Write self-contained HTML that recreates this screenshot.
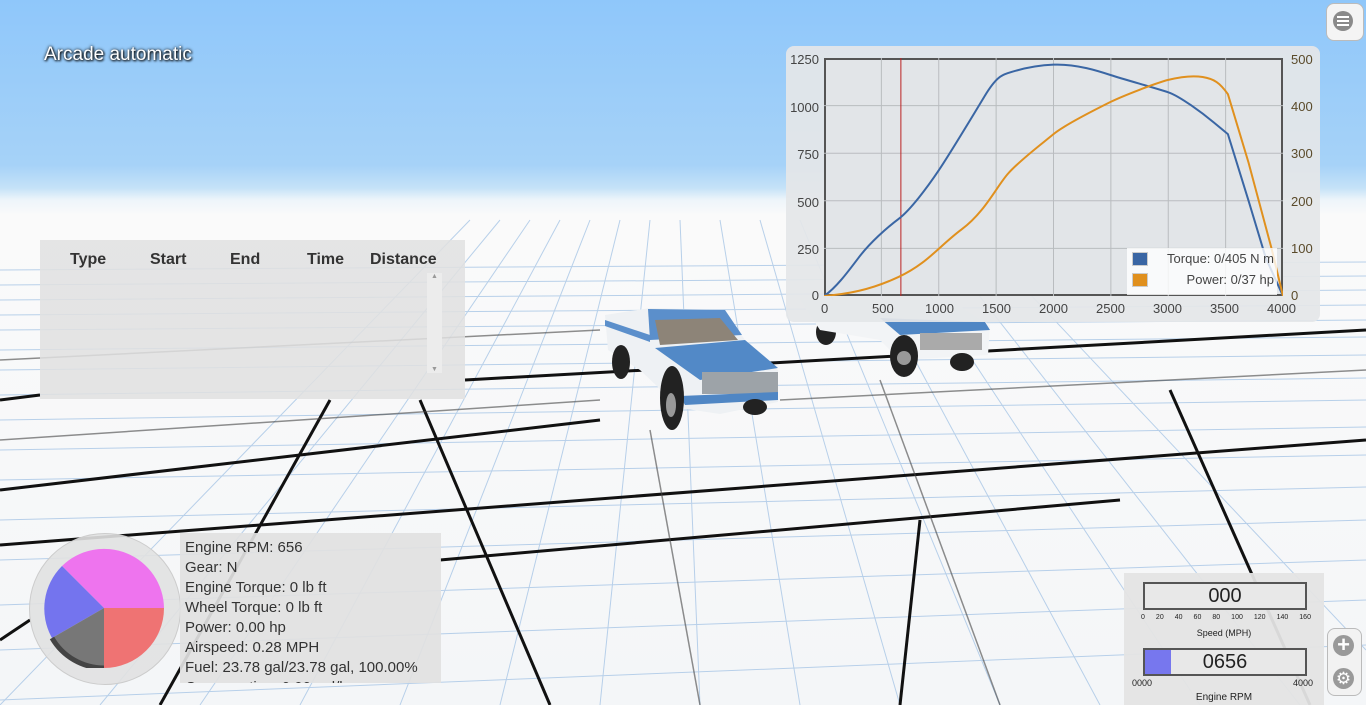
<!DOCTYPE html>
<html><head><meta charset="utf-8">
<style>
body{margin:0;width:1366px;height:705px;overflow:hidden;position:relative;font-family:"Liberation Sans",sans-serif;
background:linear-gradient(#8fc7fa 0px,#a6d2f8 165px,#c5e2f8 188px,#eef5fa 200px,#fafafa 215px,#f4f6f8 705px);}
.abs{position:absolute}
</style></head><body>
<svg class="abs" style="left:0;top:0" width="1366" height="705">
<g stroke="#a8c6e6" stroke-width="1" opacity="0.8">
<line x1="0" y1="270" x2="1366" y2="262"/><line x1="0" y1="285" x2="1366" y2="276"/>
<line x1="0" y1="300" x2="1366" y2="290"/><line x1="0" y1="315" x2="1366" y2="305"/><line x1="0" y1="330" x2="1366" y2="320"/><line x1="0" y1="350" x2="1366" y2="337"/><line x1="0" y1="370" x2="1366" y2="355"/>
<line x1="0" y1="395" x2="1366" y2="378"/><line x1="0" y1="420" x2="1366" y2="400"/><line x1="0" y1="450" x2="1366" y2="427"/><line x1="0" y1="480" x2="1366" y2="455"/><line x1="0" y1="520" x2="1366" y2="487"/><line x1="0" y1="560" x2="1366" y2="520"/>
<line x1="0" y1="605" x2="1366" y2="560"/><line x1="0" y1="650" x2="1366" y2="600"/><line x1="0" y1="700" x2="1366" y2="645"/>
<line x1="0" y1="705" x2="470" y2="220"/><line x1="100" y1="705" x2="500" y2="220"/><line x1="200" y1="705" x2="530" y2="220"/><line x1="300" y1="705" x2="560" y2="220"/><line x1="400" y1="705" x2="590" y2="220"/><line x1="500" y1="705" x2="620" y2="220"/><line x1="600" y1="705" x2="650" y2="220"/><line x1="700" y1="705" x2="680" y2="220"/>
<line x1="800" y1="705" x2="720" y2="220"/><line x1="900" y1="705" x2="760" y2="220"/><line x1="1000" y1="705" x2="800" y2="220"/><line x1="1100" y1="705" x2="840" y2="220"/><line x1="1200" y1="705" x2="880" y2="220"/><line x1="1300" y1="705" x2="920" y2="220"/><line x1="1366" y1="650" x2="960" y2="220"/>
</g>
<g stroke="#111" stroke-width="3" fill="none">
<line x1="0" y1="490" x2="600" y2="420"/><line x1="0" y1="545" x2="1366" y2="440"/>
<line x1="0" y1="400" x2="40" y2="395"/><line x1="465" y1="380" x2="1366" y2="330"/>
<line x1="550" y1="705" x2="420" y2="400"/><line x1="920" y1="520" x2="900" y2="705"/>
<line x1="160" y1="705" x2="330" y2="400"/><line x1="1310" y1="705" x2="1170" y2="390"/>
<line x1="0" y1="640" x2="30" y2="620"/><line x1="440" y1="560" x2="1120" y2="500"/>
</g>
<g stroke="#444" stroke-width="1.5" opacity="0.6">
<line x1="0" y1="360" x2="600" y2="330"/><line x1="0" y1="440" x2="600" y2="400"/><line x1="780" y1="400" x2="1366" y2="370"/>
<line x1="1000" y1="705" x2="880" y2="380"/><line x1="700" y1="705" x2="650" y2="430"/>
</g>
<g>
<ellipse cx="826" cy="332" rx="10" ry="13" fill="#222"/>
<path d="M800 300 L950 300 L990 325 L988 355 L900 360 L880 340 L820 330 Z" fill="#f2f4f6"/>
<path d="M880 318 L985 322 L990 330 L900 335 Z" fill="#4f86c4"/>
<rect x="920" y="333" width="62" height="17" fill="#aaa"/>
<ellipse cx="904" cy="356" rx="14" ry="21" fill="#222"/><circle cx="904" cy="358" r="7" fill="#999"/>
<ellipse cx="962" cy="362" rx="12" ry="9" fill="#222"/>
</g>
<g>
<path d="M605 315 L650 308 L725 310 L745 340 L778 370 L778 402 L720 414 L680 408 L640 370 L608 350 Z" fill="#eef1f4"/>
<path d="M648 309 L725 310 L742 335 L650 340 Z" fill="#5b8fcb"/>
<path d="M655 320 L720 318 L738 340 L660 345 Z" fill="#8d8478"/>
<path d="M655 348 L745 340 L778 368 L700 380 Z" fill="#5289c7"/>
<path d="M605 320 L650 335 L650 342 L605 326 Z" fill="#5b8fcb"/>
<rect x="702" y="372" width="76" height="22" fill="#9da3a8"/>
<path d="M680 396 L778 392 L778 400 L685 405 Z" fill="#4f86c4"/>
<ellipse cx="621" cy="362" rx="9" ry="17" fill="#222"/>
<ellipse cx="672" cy="398" rx="12" ry="32" fill="#222"/><ellipse cx="671" cy="405" rx="5" ry="12" fill="#999"/>
<ellipse cx="755" cy="407" rx="12" ry="8" fill="#222"/>
</g>
</svg>

<div class="abs" style="left:44px;top:44px;color:#fff;font-size:19px;text-shadow:0 0 3px #000,1px 1px 2px #000">Arcade automatic</div>

<div class="abs" style="left:1326px;top:3px;width:36px;height:36px;border-radius:8px;background:#f4f4f4;border:1px solid #bbb"></div>
<div class="abs" style="left:1333px;top:11px;width:20px;height:20px;border-radius:50%;background:#8a8a8a"></div>
<div class="abs" style="left:1337px;top:16px;width:12px;height:2px;background:#fff;box-shadow:0 4px 0 #fff,0 8px 0 #fff"></div>

<div class="abs" style="left:40px;top:240px;width:425px;height:159px;background:rgba(225,225,225,0.85)">
<div class="abs" style="top:11px;left:0;width:410px;font-weight:bold;font-size:16px;color:#333">
<span class="abs" style="left:30px">Type</span><span class="abs" style="left:110px">Start</span><span class="abs" style="left:190px">End</span><span class="abs" style="left:267px">Time</span><span class="abs" style="left:330px">Distance</span></div>
<div class="abs" style="left:387px;top:33px;width:15px;height:100px;background:#ececec;font-size:7px;color:#999;text-align:center">▲<div style="position:absolute;bottom:0;width:15px">▼</div></div>
</div>

<div class="abs" style="left:786px;top:46px;width:534px;height:276px;border-radius:8px;background:rgba(228,230,232,0.93)"></div>
<div class="abs" style="left:824px;top:58px;width:459px;height:238px;background:#e2e5e8;border:2px solid #555;box-sizing:border-box"></div>
<svg class="abs" style="left:824px;top:58px" width="459" height="238" viewBox="0 0 4000 1250" preserveAspectRatio="none">
<g stroke="#b9bcbf" stroke-width="1">
<line x1="500" y1="0" x2="500" y2="1250" vector-effect="non-scaling-stroke"/><line x1="1000" y1="0" x2="1000" y2="1250" vector-effect="non-scaling-stroke"/>
<line x1="1500" y1="0" x2="1500" y2="1250" vector-effect="non-scaling-stroke"/><line x1="2000" y1="0" x2="2000" y2="1250" vector-effect="non-scaling-stroke"/>
<line x1="2500" y1="0" x2="2500" y2="1250" vector-effect="non-scaling-stroke"/><line x1="3000" y1="0" x2="3000" y2="1250" vector-effect="non-scaling-stroke"/>
<line x1="3500" y1="0" x2="3500" y2="1250" vector-effect="non-scaling-stroke"/>
<line x1="0" y1="250" x2="4000" y2="250" vector-effect="non-scaling-stroke"/><line x1="0" y1="500" x2="4000" y2="500" vector-effect="non-scaling-stroke"/>
<line x1="0" y1="750" x2="4000" y2="750" vector-effect="non-scaling-stroke"/><line x1="0" y1="1000" x2="4000" y2="1000" vector-effect="non-scaling-stroke"/>
</g>
<line x1="670" y1="0" x2="670" y2="1250" stroke="#b22" stroke-width="1" vector-effect="non-scaling-stroke"/>
<g transform="translate(0,1250) scale(1,-1)" fill="none" stroke-width="2">
<path vector-effect="non-scaling-stroke" stroke="#3a66a4" d="M0 0 C100 40 200 120 300 200 S550 360 650 405 S900 570 1000 660 S1300 950 1400 1050 S1550 1160 1600 1170 S1800 1210 2000 1215 S2400 1180 2500 1160 S2900 1090 3000 1070 S3300 960 3400 910 L3520 850 L3700 500 L3850 200 L4000 0"/>
<path vector-effect="non-scaling-stroke" stroke="#e0901e" d="M0 0 C200 10 400 30 650 100 S1000 260 1200 350 S1500 570 1600 640 S1900 800 2000 850 S2400 990 2500 1020 S2900 1120 3000 1135 S3200 1160 3300 1150 S3450 1120 3520 1060 L3700 700 L3900 250 L4000 0"/>
</g>
</svg>
<div class="abs" style="left:1127px;top:248px;width:150px;height:47px;background:rgba(255,255,255,0.8);font-size:13px;color:#444">
<div class="abs" style="left:5px;top:4px;width:14px;height:12px;background:#3a66a4;border:1px solid #ccc"></div>
<div class="abs" style="left:5px;top:25px;width:14px;height:12px;background:#e0901e;border:1px solid #ccc"></div>
<div class="abs" style="right:3px;top:3px">Torque: 0/405 N m</div>
<div class="abs" style="right:3px;top:24px">Power: 0/37 hp</div>
</div>
<div class="abs" style="left:786px;top:50px;width:33px;text-align:right;font-size:13px;color:#444;line-height:1">
<div class="abs" style="right:0;top:3px">1250</div><div class="abs" style="right:0;top:51px">1000</div><div class="abs" style="right:0;top:98px">750</div>
<div class="abs" style="right:0;top:146px">500</div><div class="abs" style="right:0;top:193px">250</div><div class="abs" style="right:0;top:239px">0</div></div>
<div class="abs" style="left:1291px;top:53px;font-size:13px;color:#5a4a2a;line-height:1">
<div class="abs" style="top:0">500</div><div class="abs" style="top:47px">400</div><div class="abs" style="top:94px">300</div>
<div class="abs" style="top:142px">200</div><div class="abs" style="top:189px">100</div><div class="abs" style="top:236px">0</div></div>
<div class="abs" style="left:0;top:302px;font-size:13px;color:#444;line-height:1">
<span class="abs" style="left:821px">0</span><span class="abs" style="left:872px">500</span><span class="abs" style="left:925px">1000</span>
<span class="abs" style="left:982px">1500</span><span class="abs" style="left:1039px">2000</span><span class="abs" style="left:1096px">2500</span>
<span class="abs" style="left:1153px">3000</span><span class="abs" style="left:1210px">3500</span><span class="abs" style="left:1267px">4000</span></div>

<div class="abs" style="left:29px;top:533px;width:150px;height:150px;border-radius:50%;background:rgba(225,225,225,0.9);border:1px solid #ccc"></div>
<svg class="abs" style="left:44px;top:548px" width="120" height="120" viewBox="-60 -60 120 120">
<path d="M0 0 L60 0 A60 60 0 0 0 -42 -42 Z" fill="#ee74ee"/>
<path d="M0 0 L-42 -42 A60 60 0 0 0 -52 30 Z" fill="#7474ee"/>
<path d="M0 0 L-52 30 A60 60 0 0 0 0 60 Z" fill="#777"/>
<path d="M0 0 L0 60 A60 60 0 0 0 60 0 Z" fill="#ef7373"/>
<path d="M-52 30 A60 60 0 0 0 0 60" stroke="#444" stroke-width="5" fill="none"/>
</svg>
<div class="abs" style="left:180px;top:533px;width:261px;height:150px;background:rgba(225,225,225,0.92);font-size:15px;color:#333;line-height:20px;padding:5px 0 0 5px;box-sizing:border-box;overflow:hidden">
Engine RPM: 656<br>Gear: N<br>Engine Torque: 0 lb ft<br>Wheel Torque: 0 lb ft<br>Power: 0.00 hp<br>Airspeed: 0.28 MPH<br>Fuel: 23.78 gal/23.78 gal, 100.00%<br>Consumption: 0.00 gal/h</div>

<div class="abs" style="left:1124px;top:573px;width:200px;height:132px;background:rgba(228,228,228,0.95);color:#222">
<div class="abs" style="left:19px;top:9px;width:160px;height:24px;border:2px solid #555;background:#e8e8e8;font-size:20px;text-align:center;line-height:24px">000</div>
<div class="abs" style="left:20px;top:35px;width:162px;height:1px;background:#555"></div>
<div class="abs" style="left:17px;top:41px;width:170px;font-size:7px;display:flex;justify-content:space-between"><span>0</span><span>20</span><span>40</span><span>60</span><span>80</span><span>100</span><span>120</span><span>140</span><span>160</span></div>
<div class="abs" style="left:0;width:200px;top:55px;font-size:9px;text-align:center">Speed (MPH)</div>
<div class="abs" style="left:19px;top:75px;width:160px;height:24px;border:2px solid #555;background:#e8e8e8;font-size:20px;text-align:center;line-height:24px"><div class="abs" style="left:0;top:0;width:26px;height:24px;background:#7777ee"></div><span style="position:relative">0656</span></div>
<div class="abs" style="left:8px;top:105px;font-size:9px">0000</div><div class="abs" style="left:169px;top:105px;font-size:9px">4000</div>
<div class="abs" style="left:0;width:200px;top:119px;font-size:10px;text-align:center">Engine RPM</div>
</div>
<div class="abs" style="left:1327px;top:628px;width:33px;height:66px;border-radius:8px;background:#f2f2f2;border:1px solid #bbb"></div>
<div class="abs" style="left:1333px;top:635px;width:21px;height:21px;border-radius:50%;background:#999;color:#fff;font-size:22px;line-height:20px;text-align:center;font-weight:bold">+</div>
<div class="abs" style="left:1333px;top:668px;width:21px;height:21px;border-radius:50%;background:#999;color:#fff;font-size:17px;line-height:21px;text-align:center">⚙</div>
</body></html>
